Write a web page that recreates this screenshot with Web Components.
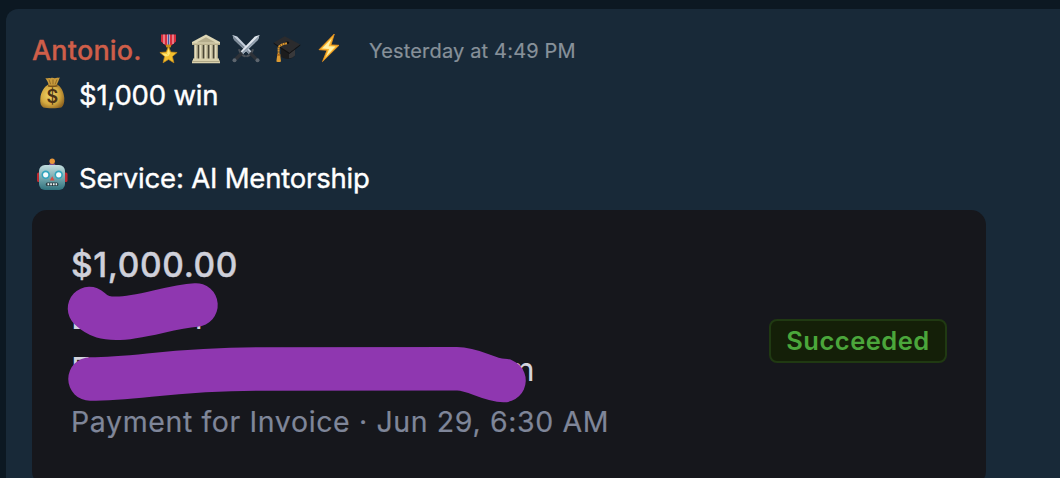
<!DOCTYPE html>
<html lang="en">
<head>
<meta charset="utf-8">
<title>Wins</title>
<style>
  body {
    margin: 0;
    height: 478px;
    overflow: hidden;
    background: #0c1822;
    font-family: Inter, "Liberation Sans", sans-serif;
  }
</style>
</head>
<body>
<chat-message>
  <message-header slot="header" name="Antonio." time="Yesterday at 4:49 PM">
    <emoji-icon name="medal"></emoji-icon>
    <emoji-icon name="building"></emoji-icon>
    <emoji-icon name="swords"></emoji-icon>
    <emoji-icon name="cap"></emoji-icon>
    <emoji-icon name="bolt"></emoji-icon>
  </message-header>
  <message-line><emoji-icon slot="icon" name="money"></emoji-icon>$1,000 win</message-line>
  <message-line></message-line>
  <message-line><emoji-icon slot="icon" name="robot"></emoji-icon>Service: AI Mentorship</message-line>
  <payment-card slot="attachment">
    <span slot="amount">$1,000.00</span>
    <span slot="detail">Payment for Invoice · Jun 29, 6:30 AM</span>
    <status-badge slot="status">Succeeded</status-badge>
  </payment-card>
</chat-message>

<script>
const icons = {
  medal: `
    <path d="M8 1.5h15v7l-4.5 4h-6L8 8.500z" fill="#d92d3c"/>
    <path d="M10.500 1.500h1v9.500h-1zM19.500 1.500h1v9.500h-1z" fill="#f4c9cd"/>
    <path d="M14.500 1.500h2v11h-2z" fill="#3c5aa8"/>
    <path d="M14 1.500h.6v11H14zM16.400 1.500h.6v11h-.6z" fill="#f0e5ee"/>
    <rect x="13" y="11.500" width="5" height="3" rx="1" fill="#c98c1c"/>
    <path d="M15.500 13.500l2.300 5.500 6.300.500-4.700 4 1.500 6.300-5.400-3.400-5.400 3.400 1.500-6.300-4.700-4 6.300-.5z" fill="#f3c02e" stroke="#c98a16" stroke-width=".7" stroke-linejoin="round"/>
    <path d="M15.500 15.500l1.500 5-1.500 2.500-1.500-2.500zM8.500 20.200l5 .6 2 2.200-3 .4z" fill="#ffe774"/>`,
  building: `
    <path d="M16 1.500L30 9v3H2V9z" fill="#ded7b6"/>
    <path d="M16 4.200L25.500 9.500h-19z" fill="#b5ad8c"/>
    <path d="M2 10.500h28V12H2z" fill="#b8af8c"/>
    <path d="M4 12h24v14H4z" fill="#4a4636"/>
    <path d="M4.300 12h3.200v14H4.300zM9.300 12h3.200v14H9.300zM14.400 12h3.200v14h-3.200zM19.500 12h3.200v14h-3.200zM24.500 12h3.200v14h-3.200z" fill="#e4ddbd"/>
    <path d="M6.500 12h1v14h-1zM11.500 12h1v14h-1zM16.600 12h1v14h-1zM21.700 12h1v14h-1zM26.700 12h1v14h-1z" fill="#a69e7e"/>
    <path d="M3 25.500h26v2h1v2.800H2v-2.800h1z" fill="#d9d1ad"/>
    <path d="M2 28h28v.8H2z" fill="#a1997a"/>`,
  swords: `
    <g>
      <path d="M2.500 2l4.700 1.500L21.500 18.500l-2.600 2.600L4 6.700z" fill="#c6d0dc"/>
      <path d="M2.500 2l18 17.800-1.600 1.300L4 6.700z" fill="#7d8a98"/>
      <path d="M17 23.200c2-.6 4.500-3 5.800-6.200" fill="none" stroke="#4b5158" stroke-width="2" stroke-linecap="round"/>
      <path d="M20.300 20.300l6.200 6" stroke="#2e3238" stroke-width="3.400"/>
      <circle cx="27.500" cy="27.200" r="2" fill="#5d656e"/>
    </g>
    <g transform="matrix(-1 0 0 1 32 0)">
      <path d="M2.500 2l4.700 1.500L21.500 18.500l-2.600 2.600L4 6.700z" fill="#e1e7ee"/>
      <path d="M2.500 2l18 17.800-1.600 1.300L4 6.700z" fill="#92a0ae"/>
      <path d="M17 23.200c2-.6 4.500-3 5.800-6.200" fill="none" stroke="#4b5158" stroke-width="2" stroke-linecap="round"/>
      <path d="M20.300 20.300l6.200 6" stroke="#2e3238" stroke-width="3.400"/>
      <circle cx="27.500" cy="27.200" r="2" fill="#5d656e"/>
    </g>`,
  cap: `
    <path d="M10 15v8.500c3.500 3.500 10.500 3.500 14-1V14z" fill="#1c1c1d"/>
    <path d="M18 19v6.300c2.500-.2 4.500-1.200 6-2.800V15z" fill="#39393b"/>
    <path d="M2.700 9.700L13.700 3.300 29.300 11.500 18.300 19.700z" fill="#2b2b2d"/>
    <path d="M2.700 9.700L18.300 19.700 29.300 11.500v1L18.300 21 2.700 10.700z" fill="#111112"/>
    <ellipse cx="16.200" cy="9.800" rx="2" ry="1.300" fill="#0d0d0e"/>
    <path d="M16 10.200c-4 .8-8 2.200-8.400 4.800v7" fill="none" stroke="#d9932a" stroke-width="2" stroke-dasharray="2 .4"/>
    <path d="M6.300 21.500h2.800l.9 7c-1.300.7-3.300.7-4.600 0z" fill="#dd9b32"/>
    <path d="M6 21h3.300v1.800H6z" fill="#a9661b"/>`,
  bolt: `
    <path d="M22.300 1L7 16.700l8 .6L10.500 28.600 27 12.300l-8-.4z" fill="#fbb62c" stroke="#ef9420" stroke-width=".8" stroke-linejoin="round"/>
    <path d="M19.700 5.500L10 15.500l7.200.4-3.500 8.200L23.500 13.500l-7-.3z" fill="#fff1a6"/>`,
  money: `
    <defs><radialGradient id="gold" cx=".42" cy=".45" r=".65">
      <stop offset="0" stop-color="#f0d569"/><stop offset=".6" stop-color="#d3a83f"/><stop offset="1" stop-color="#8f6420"/>
    </radialGradient></defs>
    <path d="M9.300 2c2 .7 3.300-.7 5.200.3 1.800-1 3-.3 4.300 0 1.500-.7 3-.4 5-.8-1 3-2 5-3.500 8h-7.500c-.5-3-2-5-3.500-7.500z" fill="#c99b3c"/>
    <path d="M13 3.500l1.700 5M17 3.500v5M21 3.500l-2 5" stroke="#8d6624" stroke-width=".9"/>
    <path d="M12.300 8.500h9c3.500 2 6.600 7 7 13.500.2 5-.8 8-3 9.500-3 1-15 1-18 0-2.500-1.500-3.500-4.500-3-9C4.800 16 8.500 10.500 12.300 8.500z" fill="url(#gold)"/>
    <path d="M12 9.700c3 .8 6 .8 9.500 0" fill="none" stroke="#785119" stroke-width="1.500"/>
    <text x="16.300" y="27.300" text-anchor="middle" font-size="18" font-weight="600" fill="#4a3216">$</text>`,
  robot: `
    <defs><linearGradient id="steel" x1="0" y1="0" x2="0" y2="1">
      <stop offset="0" stop-color="#c2dedf"/><stop offset=".5" stop-color="#78aab0"/><stop offset="1" stop-color="#2f727d"/>
    </linearGradient></defs>
    <rect x="1" y="13.500" width="4" height="9.500" rx="1.500" fill="#bd2930"/>
    <rect x="27.500" y="13.500" width="4" height="9.500" rx="1.500" fill="#bd2930"/>
    <path d="M12.800 7.200c0-2.400 1.500-3.400 3.400-3.400s3.400 1 3.400 3.400z" fill="#7c4c8b"/>
    <circle cx="16.200" cy="2.200" r="2.700" fill="#e9973a"/>
    <rect x="3" y="6" width="26" height="25" rx="6" fill="url(#steel)"/>
    <circle cx="9.700" cy="15.800" r="4.200" fill="#31a4bd"/>
    <circle cx="22.700" cy="15.800" r="4.200" fill="#31a4bd"/>
    <circle cx="9.700" cy="15.800" r="2.600" fill="#f4fcfd"/>
    <circle cx="22.700" cy="15.800" r="2.600" fill="#f4fcfd"/>
    <path d="M16.200 17.200l2.300 4.300h-4.600z" fill="#d94b42"/>
    <rect x="9.800" y="23.500" width="12.600" height="3.600" rx="1.600" fill="#283c43"/>
    <path d="M11.500 24.300h1.700v2h-1.700zM14.200 24.300h1.700v2h-1.700zM16.900 24.300h1.700v2h-1.700zM19.600 24.300h1.500v2h-1.500z" fill="#eef5f5"/>`,
};

class EmojiIcon extends HTMLElement {
  constructor() {
    super();
    this.attachShadow({ mode: "open" });
  }

  connectedCallback() {
    this.shadowRoot.innerHTML = `
      <style>
        :host { display: block; flex: none; width: 32px; height: 32px; }
        svg { display: block; overflow: visible; }
      </style>
      <svg width="32" height="32" viewBox="0 0 32 32">${icons[this.getAttribute("name")]}</svg>`;
  }
}

class MessageHeader extends HTMLElement {
  constructor() {
    super();
    this.attachShadow({ mode: "open" });
    this.shadowRoot.innerHTML = `
      <style>
        :host {
          display: flex;
          height: 34px;
          align-items: flex-start;
          white-space: nowrap;
        }
        .name {
          width: 121px;
          font-size: 27px;
          line-height: 36px;
          font-weight: 500;
          letter-spacing: 0.2px;
          color: #cf5e49;
          -webkit-text-stroke: 0.3px;
        }
        .badges {
          display: flex;
          gap: 8.700px;
          width: 216px;
        }
        ::slotted(emoji-icon:first-child) { margin-right: -4px; }
        .time {
          font-size: 20px;
          line-height: 37px;
          letter-spacing: 0.170px;
          color: #87919a;
          -webkit-text-stroke: 0.2px;
        }
      </style>
      <div class="name"></div>
      <div class="badges"><slot></slot></div>
      <div class="time"></div>`;
  }

  connectedCallback() {
    this.shadowRoot.querySelector(".name").textContent = this.getAttribute("name");
    this.shadowRoot.querySelector(".time").textContent = this.getAttribute("time");
  }
}

class MessageLine extends HTMLElement {
  constructor() {
    super();
    this.attachShadow({ mode: "open" });
    this.shadowRoot.innerHTML = `
      <style>
        :host {
          display: flex;
          gap: 11px;
          height: 41.500px;
          padding-left: 3px;
          font-size: 27.500px;
          line-height: 43.500px;
          letter-spacing: -0.2px;
          color: #fff;
          white-space: nowrap;
        }
        ::slotted(emoji-icon) { margin-top: 2px; }
        .text { -webkit-text-stroke: 0.4px; }
      </style>
      <slot name="icon"></slot>
      <div class="text"><slot></slot></div>`;
  }
}

class StatusBadge extends HTMLElement {
  constructor() {
    super();
    this.attachShadow({ mode: "open" });
    this.shadowRoot.innerHTML = `
      <style>
        :host {
          display: block;
          box-sizing: border-box;
          width: 178px;
          height: 44px;
          border: 2px solid #203912;
          border-radius: 8px;
          background: #141f08;
          color: #4ba63b;
          font-size: 25.500px;
          font-weight: 600;
          line-height: 39px;
          letter-spacing: 0.5px;
          text-align: center;
        }
      </style>
      <slot></slot>`;
  }
}

class PaymentCard extends HTMLElement {
  constructor() {
    super();
    this.attachShadow({ mode: "open" });
    this.shadowRoot.innerHTML = `
      <style>
        :host {
          display: flex;
          position: relative;
          justify-content: space-between;
          align-items: flex-start;
          box-sizing: border-box;
          width: 954px;
          height: 276px;
          padding: 29px 39px 0;
          border-radius: 15px;
          background: #16171c;
          white-space: nowrap;
        }
        .rows { line-height: 52px; }
        .amount {
          font-size: 33.500px;
          font-weight: 500;
          letter-spacing: 0.650px;
          color: #cfd0da;
          -webkit-text-stroke: 0.4px;
        }
        .hidden-row {
          display: flex;
          height: 52px;
          font-size: 33px;
          color: #d3d3dc;
        }
        .name { gap: 105px; }
        .email { gap: 415px; }
        .detail {
          padding-top: 1px;
          font-size: 28.500px;
          letter-spacing: 0.620px;
          color: #7f8699;
          -webkit-text-stroke: 0.2px;
        }
        .marker {
          position: absolute;
          left: 0;
          top: 0;
          fill: none;
          stroke: #8f37b0;
          stroke-width: 43.500px;
          stroke-linecap: round;
        }
        .status { padding-top: 79.500px; }
      </style>
      <div class="rows">
        <div class="amount"><slot name="amount"></slot></div>
        <div class="hidden-row name"><span>L</span><span>l</span></div>
        <div class="hidden-row email"><span>E</span><span>m</span></div>
        <div class="detail"><slot name="detail"></slot></div>
      </div>
      <div class="status"><slot name="status"></slot></div>
      <svg class="marker" width="954" height="268" viewBox="0 0 954 268">
        <path d="M57.500 98.500C67 107.500 75 108.300 84 108.300C110 108.300 136 97 164 95"/>
        <path d="M58 169C108 169 138 159 228 159L425 158.700C443 158.700 455 170 472 170.500"/>
      </svg>`;
  }
}

class ChatMessage extends HTMLElement {
  constructor() {
    super();
    this.attachShadow({ mode: "open" });
    this.shadowRoot.innerHTML = `
      <style>
        :host {
          display: block;
          box-sizing: border-box;
          margin: 9px 0 0 6px;
          padding: 24px 0 0;
          height: 469px;
          overflow: hidden;
          border-radius: 12px 0 0 0;
          background: #182938;
        }
        .content {
          display: flex;
          flex-direction: column;
          padding-left: 26px;
        }
        .body { padding: 7px 0 11.500px 1px; }
      </style>
      <div class="content">
        <slot name="header"></slot>
        <div class="body"><slot></slot></div>
        <slot name="attachment"></slot>
      </div>`;
  }
}

customElements.define("emoji-icon", EmojiIcon);
customElements.define("message-header", MessageHeader);
customElements.define("message-line", MessageLine);
customElements.define("status-badge", StatusBadge);
customElements.define("payment-card", PaymentCard);
customElements.define("chat-message", ChatMessage);
</script>
</body>
</html>
